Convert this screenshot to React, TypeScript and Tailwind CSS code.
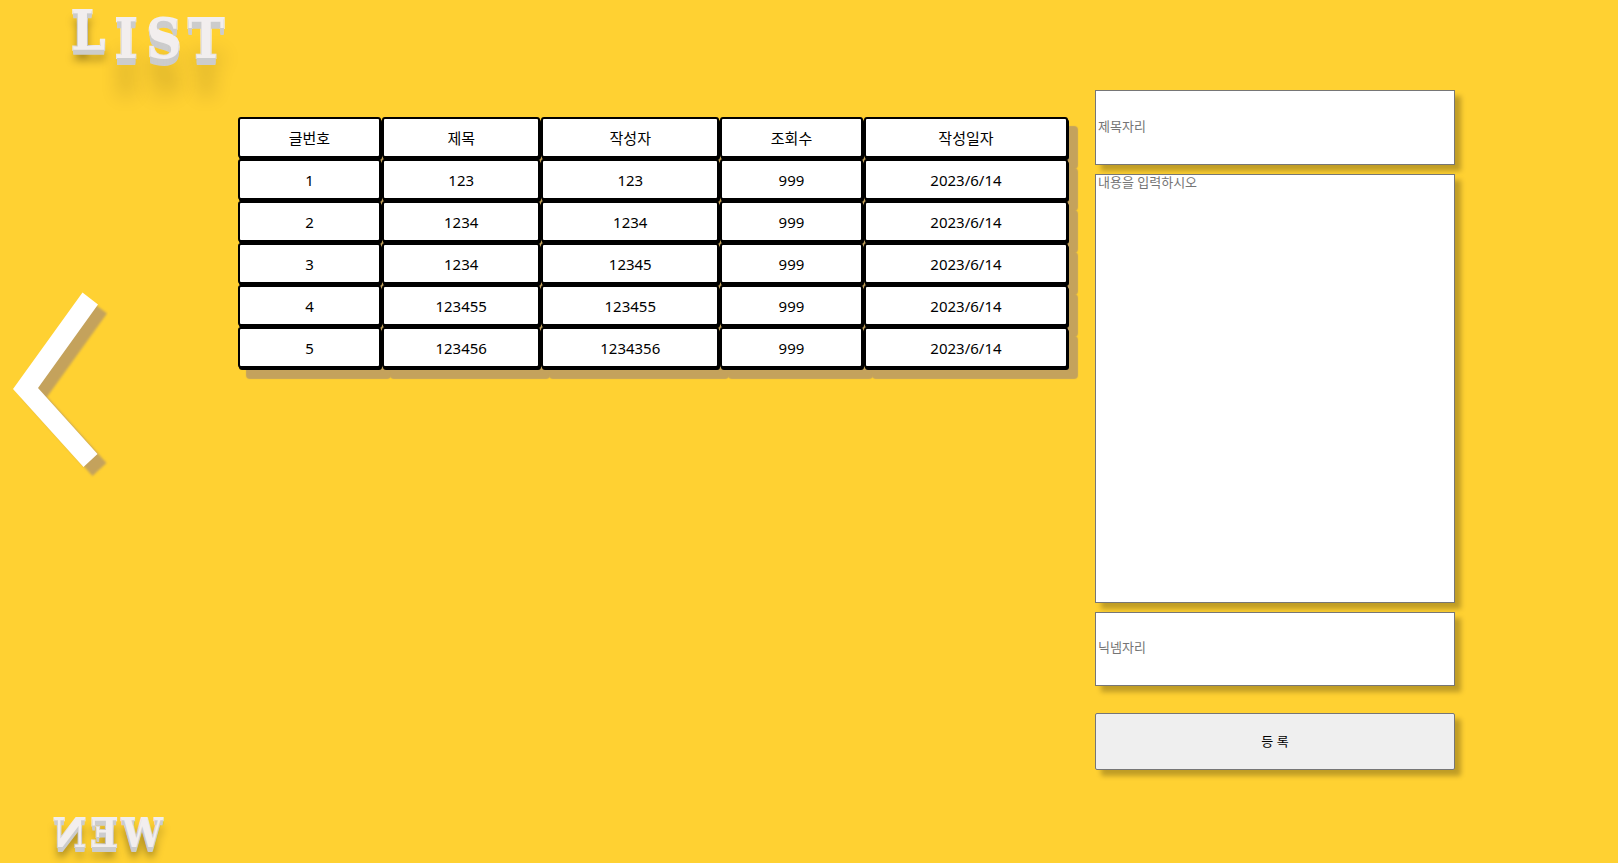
const posts = [
  { no: 1, title: '123', author: '123', views: 999, date: '2023/6/14' },
  { no: 2, title: '1234', author: '1234', views: 999, date: '2023/6/14' },
  { no: 3, title: '1234', author: '12345', views: 999, date: '2023/6/14' },
  { no: 4, title: '123455', author: '123455', views: 999, date: '2023/6/14' },
  { no: 5, title: '123456', author: '1234356', views: 999, date: '2023/6/14' },
];

const columns = [
  { label: '글번호', width: 'w-[17.3%]' },
  { label: '제목', width: 'w-[19.2%]' },
  { label: '작성자', width: 'w-[21.5%]' },
  { label: '조회수', width: 'w-[17.3%]' },
  { label: '작성일자', width: 'w-[24.7%]' },
];

const cell =
  'h-[41px] rounded-[3px] border-2 border-black bg-white p-0 text-center font-normal shadow-[1px_2px_0_#000,9px_10px_1px_1px_#c4a25c]';

const field =
  'block w-full border border-[#767676] bg-white px-0.5 text-[13px] leading-[14px] text-black placeholder:text-[#757575] shadow-[6px_6px_5px_rgba(0,0,0,0.25)] outline-none';

const slab =
  "font-['DejaVu_Serif_Condensed','DejaVu_Serif',serif] leading-none font-bold text-[#f2eeee] [-webkit-text-stroke:2px_#f2eeee] [paint-order:stroke_fill] [stroke-linejoin:round]";

const nearShadow =
  '[text-shadow:0_1px_0_#ccc,0_2px_0_#ccc,0_3px_0_#ccc,0_4px_0_#ccc,0_5px_0_#ccc,0_10px_8px_rgba(0,0,0,0.4)]';
const farShadow =
  '[text-shadow:0_1px_0_#ccc,0_2px_0_#ccc,0_3px_0_#ccc,0_4px_0_#ccc,0_5px_0_#ccc,0_6px_0_#ccc,0_7px_0_#ccc,0_36px_20px_rgba(0,0,0,0.2)]';

function ListTitle() {
  return (
    <h1 aria-label="List" className={`flex pt-1 pl-[68px] text-[54px] ${slab}`}>
      <span className={`w-10 text-center ${nearShadow}`}>L</span>
      <span className={`mt-2 w-9 text-center ${farShadow}`}>I</span>
      <span className={`mt-2 w-10 text-center ${farShadow}`}>S</span>
      <span className={`mt-2 w-11 text-center ${farShadow}`}>T</span>
    </h1>
  );
}

function NewLink() {
  return (
    <a href="#new" aria-label="New" className={`mt-auto flex pb-[10px] pl-[53px] text-[40px] ${slab}`}>
      <span className={`-scale-x-100 ${nearShadow}`}>N</span>
      <span className={`w-9 -scale-x-100 text-center ${nearShadow}`}>E</span>
      <span className={nearShadow}>W</span>
    </a>
  );
}

export default function App() {
  return (
    <main className="grid min-h-screen grid-cols-[237px_minmax(0,1fr)_360px] bg-[#ffd132] pr-[163px] font-['Noto_Sans','Noto_Sans_CJK_KR',sans-serif] text-black">
      <div className="flex flex-col">
        <ListTitle />
        <button type="button" aria-label="이전" className="mt-56 ml-3 self-start">
          <svg width="96" height="190" viewBox="12 290 96 190" className="block">
            <path
              d="M91.5 301.5L107 313.5L47 397L106.500 463L92.500 476L22 398Z"
              fill="#c4a25c"
              className="blur-[1px]"
            />
            <path d="M82.500 292.500L98 304.500L38 388L97.500 454L83.500 467L13 389Z" fill="#fff" />
          </svg>
        </button>
        <NewLink />
      </div>

      <section className="pt-[116px] pr-[26px]">
        <table className="w-full table-fixed border-separate border-spacing-px text-[15px] leading-5">
          <thead>
            <tr>
              {columns.map((c) => (
                <th key={c.label} scope="col" className={`${c.width} ${cell}`}>
                  {c.label}
                </th>
              ))}
            </tr>
          </thead>
          <tbody>
            {posts.map((p) => (
              <tr key={p.no}>
                <td className={cell}>{p.no}</td>
                <td className={cell}>{p.title}</td>
                <td className={cell}>{p.author}</td>
                <td className={cell}>{p.views}</td>
                <td className={cell}>{p.date}</td>
              </tr>
            ))}
          </tbody>
        </table>
      </section>

      <form className="flex flex-col pt-[90px]" onSubmit={(e) => e.preventDefault()}>
        <input type="text" aria-label="제목" placeholder="제목자리" className={`${field} h-[75px] pb-1`} />
        <textarea
          aria-label="내용"
          placeholder="내용을 입력하시오"
          className={`${field} mt-[9px] h-[429px] resize-none`}
        />
        <input type="text" aria-label="닉네임" placeholder="닉넴자리" className={`${field} mt-[9px] h-[74px] pb-1`} />
        <button
          type="submit"
          className="mt-[27px] h-[57px] rounded-[2px] border border-[#767676] bg-[#efefef] text-[13px] shadow-[6px_6px_5px_rgba(0,0,0,0.25)]"
        >
          등 록
        </button>
      </form>
    </main>
  );
}
